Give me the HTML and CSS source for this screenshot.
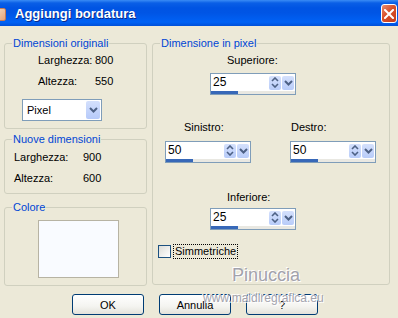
FILE: index.html
```html
<!DOCTYPE html>
<html lang="it">
  <head>
    <meta charset="UTF-8" />
    <meta name="viewport" content="width=device-width, initial-scale=1.0" />
    <title>Aggiungi bordatura</title>
    <link rel="stylesheet" href="styles.css">
  </head>
  <body>
    <div class="window">
      <header class="titlebar">
        <span class="app-icon"></span>
        <span class="title">Aggiungi bordatura</span>
        <span class="close">
          <svg width="10" height="10" viewBox="0 0 10 10">
            <path d="M1 1 L9 9 M9 1 L1 9" stroke="#fff" stroke-width="2" stroke-linecap="square" />
          </svg>
        </span>
      </header>

      <main class="content">
        <div class="col-left">
          <!-- Dimensioni originali -->
          <div class="group group-orig">
            <span class="legend">Dimensioni originali</span>
            <div class="info">
              <span>Larghezza:</span><span>800</span>
              <span>Altezza:</span><span>550</span>
            </div>
            <div class="select">
              <span class="select-text">Pixel</span>
              <span class="drop-btn">
                <svg width="9" height="6" viewBox="0 0 9 6"><path d="M1 1 L4.5 4.5 L8 1" fill="none" stroke="#4d6185" stroke-width="2" /></svg>
              </span>
            </div>
          </div>

          <!-- Nuove dimensioni -->
          <div class="group group-new">
            <span class="legend">Nuove dimensioni</span>
            <div class="info">
              <span>Larghezza:</span><span>900</span>
              <span>Altezza:</span><span>600</span>
            </div>
          </div>

          <!-- Colore -->
          <div class="group group-color">
            <span class="legend">Colore</span>
            <div class="swatch"></div>
          </div>
        </div>

        <!-- Dimensione in pixel -->
        <div class="group group-pixel">
          <span class="legend">Dimensione in pixel</span>

          <div class="field field-top">
            <div class="label">Superiore:</div>
            <div class="spin">
              <div class="spin-row">
                <span class="spin-value">25</span>
                <span class="spin-btn">
                  <svg width="8" height="11" viewBox="0 0 8 11"><path d="M1 4 L4 1 L7 4 M1 7 L4 10 L7 7" fill="none" stroke="#4d6185" stroke-width="1.6" /></svg>
                </span>
                <span class="spin-btn">
                  <svg width="9" height="6" viewBox="0 0 9 6"><path d="M1 1 L4.5 4.5 L8 1" fill="none" stroke="#4d6185" stroke-width="2" /></svg>
                </span>
              </div>
              <div class="track"><div class="bar"></div></div>
            </div>
          </div>

          <div class="pair">
            <div class="field field-left">
              <div class="label">Sinistro:</div>
              <div class="spin">
                <div class="spin-row">
                  <span class="spin-value">50</span>
                  <span class="spin-btn">
                    <svg width="8" height="11" viewBox="0 0 8 11"><path d="M1 4 L4 1 L7 4 M1 7 L4 10 L7 7" fill="none" stroke="#4d6185" stroke-width="1.6" /></svg>
                  </span>
                  <span class="spin-btn">
                    <svg width="9" height="6" viewBox="0 0 9 6"><path d="M1 1 L4.5 4.5 L8 1" fill="none" stroke="#4d6185" stroke-width="2" /></svg>
                  </span>
                </div>
                <div class="track"><div class="bar"></div></div>
              </div>
            </div>
            <div class="field field-right">
              <div class="label">Destro:</div>
              <div class="spin">
                <div class="spin-row">
                  <span class="spin-value">50</span>
                  <span class="spin-btn">
                    <svg width="8" height="11" viewBox="0 0 8 11"><path d="M1 4 L4 1 L7 4 M1 7 L4 10 L7 7" fill="none" stroke="#4d6185" stroke-width="1.6" /></svg>
                  </span>
                  <span class="spin-btn">
                    <svg width="9" height="6" viewBox="0 0 9 6"><path d="M1 1 L4.5 4.5 L8 1" fill="none" stroke="#4d6185" stroke-width="2" /></svg>
                  </span>
                </div>
                <div class="track"><div class="bar"></div></div>
              </div>
            </div>
          </div>

          <div class="field field-bottom">
            <div class="label">Inferiore:</div>
            <div class="spin">
              <div class="spin-row">
                <span class="spin-value">25</span>
                <span class="spin-btn">
                  <svg width="8" height="11" viewBox="0 0 8 11"><path d="M1 4 L4 1 L7 4 M1 7 L4 10 L7 7" fill="none" stroke="#4d6185" stroke-width="1.6" /></svg>
                </span>
                <span class="spin-btn">
                  <svg width="9" height="6" viewBox="0 0 9 6"><path d="M1 1 L4.5 4.5 L8 1" fill="none" stroke="#4d6185" stroke-width="2" /></svg>
                </span>
              </div>
              <div class="track"><div class="bar"></div></div>
            </div>
          </div>

          <label class="check">
            <span class="box"></span>
            <span class="check-text">Simmetriche</span>
          </label>
        </div>
      </main>

      <footer class="buttons">
        <button>OK</button>
        <button>Annulla</button>
        <button>?</button>
      </footer>

      <div class="watermark">
        <span class="wm-name">Pinuccia</span>
        <span class="wm-site">www.maidiregrafica.eu</span>
      </div>
    </div>
  </body>
</html>
```

FILE: styles.css
```css
* {
  box-sizing: border-box;
  margin: 0;
  padding: 0;
}

body {
  font-family: "Liberation Sans", Arial, sans-serif;
  font-size: 11px;
  color: #000;
  background-color: #ece9d8;
  overflow: hidden;
}

.window {
  position: relative;
  width: 398px;
  height: 318px;
  overflow: hidden;
}

/* title bar */
.titlebar {
  height: 26px;
  display: flex;
  align-items: center;
  background: linear-gradient(to bottom, #3a8cf5 0, #0a5fe6 3px, #0054e3 8px, #0055e5 50%, #0062f5 85%, #0050d8 100%);
}

.app-icon {
  width: 14px;
  height: 13px;
  margin-left: -8px;
  margin-top: 2px;
  border-radius: 2px;
  background: linear-gradient(135deg, #f4e3c8, #e6a27a);
  border: 1px solid #c47a55;
}

.title {
  margin-left: 9px;
  margin-top: 1px;
  color: #fff;
  font-weight: bold;
  font-size: 13px;
  text-shadow: 1px 1px 0 #0a2a8a;
}

.close {
  margin-left: auto;
  margin-right: 1px;
  margin-top: 1px;
  width: 16px;
  height: 19px;
  display: flex;
  align-items: center;
  justify-content: center;
  border: 1px solid #fff;
  border-radius: 3px;
  background: linear-gradient(135deg, #e88d70, #d9502a 45%, #c23a1c);
}

/* content */
.content {
  display: flex;
  gap: 5px;
  padding: 17px 0 0 4px;
}

.col-left {
  width: 143px;
}

.group {
  position: relative;
  border: 1px solid #d0d0bf;
  border-radius: 3px;
}

.legend {
  position: absolute;
  top: -7px;
  left: 7px;
  padding: 0 1px;
  line-height: 13px;
  color: #0046d5;
  background-color: #ece9d8;
}

.info {
  display: grid;
  row-gap: 8px;
  line-height: 13px;
}

.group-orig {
  height: 86px;
  padding: 10px 0 0 33px;
}

.group-orig .info {
  grid-template-columns: 57px auto;
}

.select {
  display: flex;
  align-items: center;
  width: 80px;
  height: 22px;
  margin: 11px 0 0 -16px;
  border: 1px solid #7f9db9;
  background-color: #fff;
}

.select-text {
  flex: 1;
  padding-left: 4px;
}

.drop-btn {
  width: 14px;
  height: 18px;
  margin-right: 1px;
  display: flex;
  align-items: center;
  justify-content: center;
  border-radius: 2px;
  background: linear-gradient(to bottom, #d4e0fc, #b6cafa);
}

.group-new {
  height: 55px;
  margin-top: 10px;
  padding: 11px 0 0 9px;
}

.group-new .info {
  grid-template-columns: 69px auto;
}

.group-color {
  height: 79px;
  margin-top: 13px;
  padding: 12px 0 0 33px;
}

.swatch {
  width: 81px;
  height: 58px;
  border: 1px solid #b7b3a3;
  background-color: #f9fbff;
}

/* right group */
.group-pixel {
  width: 238px;
  height: 242px;
}

.label {
  line-height: 13px;
}

.field-top,
.field-bottom {
  margin-left: 57px;
}

.field-top {
  padding-top: 10px;
}

.field-top .label,
.field-bottom .label {
  padding-left: 17px;
}

.field-top .spin {
  margin-top: 6px;
}

.pair {
  display: flex;
  gap: 39px;
  margin: 26px 0 0 12px;
}

.field-left .label {
  padding-left: 19px;
}

.field-right .label {
  padding-left: 1px;
}

.pair .spin {
  margin-top: 7px;
}

.field-bottom {
  margin-top: 28px;
}

.field-bottom .spin {
  margin-top: 4px;
}

.spin {
  width: 86px;
  height: 22px;
  border: 1px solid #7f9db9;
  background-color: #fff;
}

.spin-row {
  display: flex;
  align-items: center;
  height: 16px;
}

.spin-value {
  flex: 1;
  padding-left: 2px;
  font-size: 12px;
}

.spin-btn {
  width: 12px;
  height: 14px;
  margin-top: 1px;
  display: flex;
  align-items: center;
  justify-content: center;
  border-radius: 2px;
  background: linear-gradient(to bottom, #d4e0fc, #b8ccf9);
}

.spin-btn:last-child {
  margin-left: 1px;
  margin-right: 1px;
}

.track {
  height: 3px;
  margin-top: 1px;
  background-color: #e9e8e2;
}

.bar {
  width: 27px;
  height: 3px;
  background-color: #3768b8;
}

.check {
  display: flex;
  align-items: center;
  margin: 14px 0 0 5px;
}

.box {
  width: 13px;
  height: 13px;
  border: 1px solid #1c5180;
  background: linear-gradient(135deg, #dcdcd7, #fff);
}

.check-text {
  margin-left: 2px;
  padding: 0 1px;
  line-height: 13px;
  border: 1px dotted #000;
}

/* buttons */
.buttons {
  display: flex;
  gap: 15px;
  padding: 8px 0 0 72px;
}

.buttons button {
  width: 72px;
  height: 21px;
  font-family: "Liberation Sans", Arial, sans-serif;
  font-size: 11px;
  color: #000;
  border: 1px solid #003c74;
  border-radius: 3px;
  background: linear-gradient(to bottom, #fff 0, #f4f4f0 60%, #e3e2da 100%);
}

/* watermark */
.watermark span {
  position: absolute;
  color: #a2a2ac;
  text-shadow: 1px 1px 0 #fff, -1px -1px 0 #fff;
}

.wm-name {
  left: 232px;
  top: 265px;
  font-size: 18px;
}

.wm-site {
  left: 203px;
  top: 291px;
  font-size: 12px;
}
```
